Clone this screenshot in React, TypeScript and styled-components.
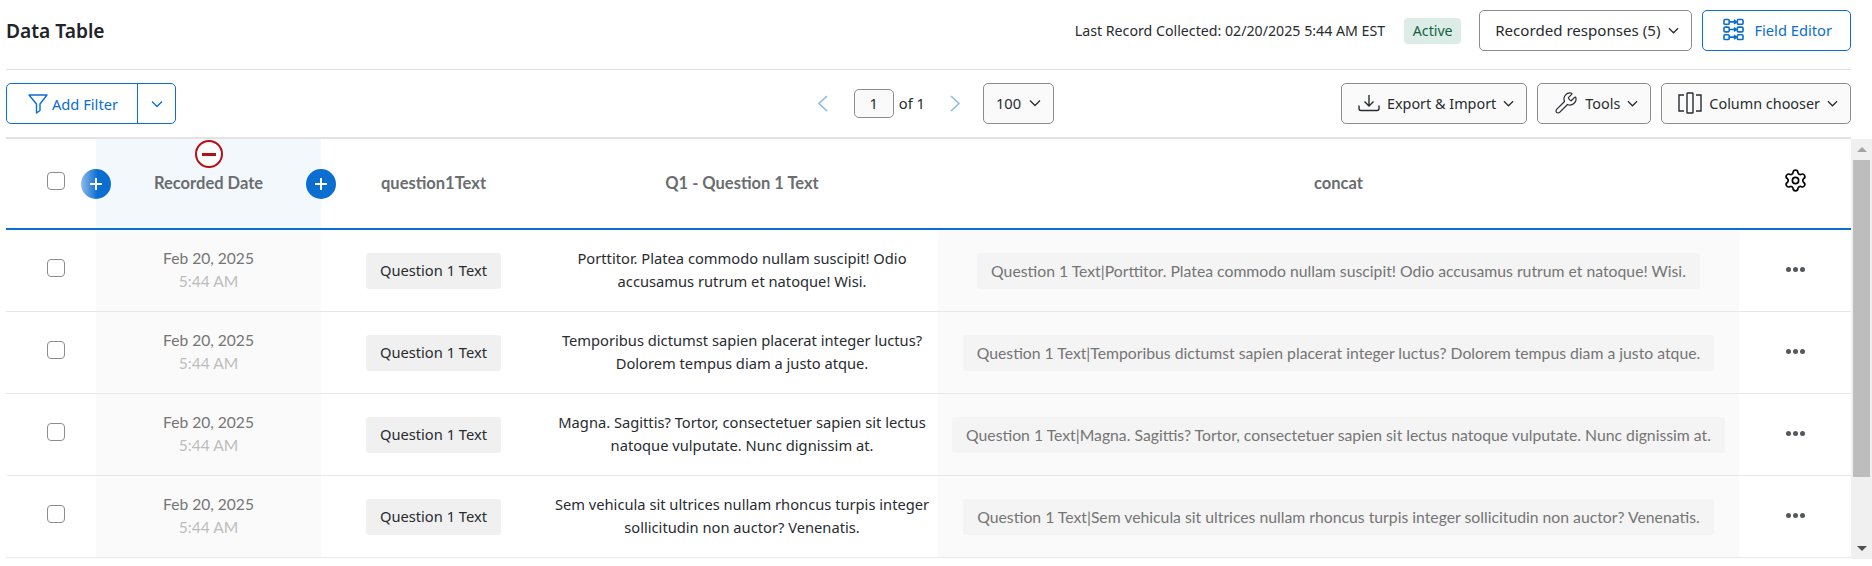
import styled, { createGlobalStyle } from "styled-components";
import { Settings, Wrench } from "lucide-react";

const rows = [
  {
    id: 1,
    text: "Porttitor. Platea commodo nullam suscipit! Odio accusamus rutrum et natoque! Wisi.",
  },
  {
    id: 2,
    text: "Temporibus dictumst sapien placerat integer luctus? Dolorem tempus diam a justo atque.",
  },
  {
    id: 3,
    text: "Magna. Sagittis? Tortor, consectetuer sapien sit lectus natoque vulputate. Nunc dignissim at.",
  },
  {
    id: 4,
    text: "Sem vehicula sit ultrices nullam rhoncus turpis integer sollicitudin non auctor? Venenatis.",
  },
];

const Chevron = ({ size = 11 }: { size?: number }) => (
  <svg width={size} height={size} viewBox="0 0 12 12" fill="none">
    <path d="M1 3.5 L6 8.5 L11 3.5" stroke="currentColor" strokeWidth="1.3" />
  </svg>
);

const FilterIcon = () => (
  <svg width="20" height="20" viewBox="0 0 20 20" fill="none">
    <path
      d="M1 1 H19 L12 10 V16.5 L8.5 19 V10 Z"
      stroke="currentColor"
      strokeWidth="1.4"
      strokeLinejoin="round"
    />
  </svg>
);

const FieldEditorIcon = () => (
  <svg width="21" height="24" viewBox="0 0 22 24" fill="none" stroke="currentColor" strokeWidth="1.7">
    {[1, 9, 17].map((y) => (
      <g key={y}>
        <rect x="1" y={y} width="5.5" height="5" rx="1.2" />
        <rect x="15" y={y} width="6" height="5" rx="1.2" />
        <path d={`M7 ${y + 2.5} H14 M11.5 ${y + 0.5} L14 ${y + 2.5} L11.5 ${y + 4.5}`} />
      </g>
    ))}
  </svg>
);

const ExportIcon = () => (
  <svg width="22" height="18" viewBox="0 0 22 18" fill="none" stroke="currentColor" strokeWidth="1.4">
    <path d="M11 1 V11.5 M6.5 7.5 L11 12 L15.5 7.5" />
    <path d="M1 12 V14.5 A2 2 0 0 0 3 16.5 H19 A2 2 0 0 0 21 14.5 V12" strokeLinecap="round" />
  </svg>
);

const ColumnsIcon = () => (
  <svg width="24" height="22" viewBox="0 0 24 22" fill="none" stroke="currentColor" strokeWidth="1.4">
    <path d="M6 3 H1 V19 H6" />
    <rect x="9" y="1" width="6" height="20" rx="0.5" />
    <path d="M18 3 H23 V19 H18" />
  </svg>
);

const PlusIcon = () => (
  <svg width="14" height="14" viewBox="0 0 14 14" fill="none">
    <path d="M7 1 V13 M1 7 H13" stroke="#fff" strokeWidth="2" />
  </svg>
);

const App = () => {
  return (
    <Page>
      <GlobalStyle />
      <Main>
        <TopBar>
          <Title>Data Table</Title>
          <TopRight>
            <LastRecord>Last Record Collected: 02/20/2025 5:44 AM EST</LastRecord>
            <ActiveBadge>Active</ActiveBadge>
            <ToolButton $plain>
              Recorded responses (5)
              <Chevron />
            </ToolButton>
            <BlueButton>
              <FieldEditorIcon />
              Field Editor
            </BlueButton>
          </TopRight>
        </TopBar>

        <Toolbar>
          <FilterGroup>
            <FilterMain>
              <FilterIcon />
              Add Filter
            </FilterMain>
            <FilterCaret>
              <Chevron size={12} />
            </FilterCaret>
          </FilterGroup>

          <Pager>
            <PageArrow>
              <svg width="11" height="17" viewBox="0 0 11 17" fill="none">
                <path d="M10 1 L2 8.5 L10 16" stroke="currentColor" strokeWidth="1.7" />
              </svg>
            </PageArrow>
            <PageInput>1</PageInput>
            <PageOf>of 1</PageOf>
            <PageArrow>
              <svg width="11" height="17" viewBox="0 0 11 17" fill="none">
                <path d="M1 1 L9 8.5 L1 16" stroke="currentColor" strokeWidth="1.7" />
              </svg>
            </PageArrow>
            <PageSize>
              100
              <Chevron size={12} />
            </PageSize>
          </Pager>

          <ToolbarRight>
            <ToolButton>
              <ExportIcon />
              Export &amp; Import
              <Chevron />
            </ToolButton>
            <ToolButton>
              <Wrench size={24} strokeWidth={1.2} />
              Tools
              <Chevron />
            </ToolButton>
            <ToolButton>
              <ColumnsIcon />
              Column chooser
              <Chevron />
            </ToolButton>
          </ToolbarRight>
        </Toolbar>

        <HeaderRow>
          <CheckCell>
            <Checkbox />
          </CheckCell>
          <HeaderCell $active>Recorded Date</HeaderCell>
          <HeaderCell>question1Text</HeaderCell>
          <HeaderCell>Q1 - Question 1 Text</HeaderCell>
          <HeaderCell>concat</HeaderCell>
          <GearCell>
            <Settings size={25} strokeWidth={1.6} color="#000" />
          </GearCell>
          <AddColumn $left={75} $fade>
            <PlusIcon />
          </AddColumn>
          <AddColumn $left={300}>
            <PlusIcon />
          </AddColumn>
          <RemoveColumn />
        </HeaderRow>

        {rows.map((row) => (
          <Row key={row.id}>
            <CheckCell>
              <Checkbox />
            </CheckCell>
            <DateCell>
              <DateText>Feb 20, 2025</DateText>
              <TimeText>5:44 AM</TimeText>
            </DateCell>
            <Cell>
              <Chip>Question 1 Text</Chip>
            </Cell>
            <TextCell>{row.text}</TextCell>
            <ConcatCell>
              <ConcatChip>Question 1 Text|{row.text}</ConcatChip>
            </ConcatCell>
            <Cell>
              <Dots>
                <Dot />
                <Dot />
                <Dot />
              </Dots>
            </Cell>
          </Row>
        ))}
      </Main>

      <Scrollbar>
        <ScrollButton>
          <ArrowUp />
        </ScrollButton>
        <ScrollThumb />
        <ScrollButton $bottom>
          <ArrowDown />
        </ScrollButton>
      </Scrollbar>
    </Page>
  );
};

export default App;

const GlobalStyle = createGlobalStyle`
  html, body {
    margin: 0;
    height: 566px;
    overflow: hidden;
    background: #fff;
  }
  * {
    box-sizing: border-box;
  }
  body {
    font-family: "Noto Sans", "Open Sans", sans-serif;
    font-size: 14.7px;
    color: #282c30;
  }
`;

const roundFont = `"Lato", "Noto Sans", sans-serif`;

const Page = styled.div`
  display: flex;
  align-items: flex-start;
  width: 1872px;
  height: 566px;
  padding-left: 6px;
`;

const Main = styled.div`
  width: 1845px;
`;

const TopBar = styled.div`
  display: flex;
  justify-content: space-between;
  align-items: center;
  height: 70px;
  padding: 10px 0 18px;
  border-bottom: 1px solid #e2e2e2;
`;

const Title = styled.h1`
  margin: 0;
  font-size: 19.2px;
  font-weight: 600;
  color: #1f2429;
`;

const TopRight = styled.div`
  display: flex;
  align-items: center;
`;

const LastRecord = styled.span`
  font-size: 14.2px;
  margin-right: 19px;
`;

const ActiveBadge = styled.span`
  display: flex;
  align-items: center;
  justify-content: center;
  width: 57px;
  height: 26px;
  margin-right: 18px;
  border-radius: 4px;
  background: #dcece6;
  color: #14633f;
  font-size: 14.2px;
`;

const ToolButton = styled.div<{ $plain?: boolean }>`
  display: flex;
  align-items: center;
  gap: ${(props) => (props.$plain ? "8px" : "7px")};
  height: 41px;
  padding: 0 12px 1px ${(props) => (props.$plain ? "15px" : "16px")};
  border: 1px solid #8c8c8c;
  border-radius: 5px;
  background: ${(props) => (props.$plain ? "#fff" : "#fafafa")};
  font-size: ${(props) => (props.$plain ? "15.1px" : "14.4px")};
  white-space: nowrap;
`;

const BlueButton = styled.div`
  display: flex;
  align-items: center;
  gap: 10px;
  height: 41px;
  margin-left: 10px;
  padding: 0 18px 1px 20px;
  border: 1px solid #0b6ed0;
  border-radius: 5px;
  color: #0b6ed0;
  white-space: nowrap;
`;

const Toolbar = styled.div`
  display: grid;
  grid-template-columns: 1fr auto 1fr;
  align-items: center;
  height: 69px;
  border-bottom: 2px solid #e2e2e2;
`;

const FilterGroup = styled.div`
  display: flex;
  width: 170px;
  height: 41px;
  border: 1px solid #0b6ed0;
  border-radius: 5px;
  color: #0b6ed0;
`;

const FilterMain = styled.div`
  display: flex;
  align-items: center;
  justify-content: center;
  gap: 4px;
  flex: 1;
  padding-left: 2px;
  border-right: 1px solid #0b6ed0;
`;

const FilterCaret = styled.div`
  display: flex;
  align-items: center;
  justify-content: center;
  width: 37px;
`;

const Pager = styled.div`
  display: flex;
  align-items: center;
  margin-left: 14px;
`;

const PageArrow = styled.div`
  display: flex;
  color: #8fbdea;
`;

const PageInput = styled.div`
  width: 40px;
  height: 29px;
  margin: 0 5px 0 26px;
  border: 1px solid #8c8c8c;
  border-radius: 5px;
  background: #fafafa;
  text-align: center;
  line-height: 26px;
`;

const PageOf = styled.span`
  margin: 0 25px 1px 0;
`;

const PageSize = styled.div`
  display: flex;
  align-items: center;
  gap: 8px;
  height: 41px;
  margin-left: 22px;
  padding: 0 12px 1px;
  border: 1px solid #8c8c8c;
  border-radius: 5px;
  background: #fafafa;
`;

const ToolbarRight = styled.div`
  display: flex;
  justify-content: flex-end;
  gap: 10px;
`;

const gridColumns = "90px 225px 225px 392px 801px 112px";

const HeaderRow = styled.div`
  position: relative;
  display: grid;
  grid-template-columns: ${gridColumns};
  height: 91px;
  border-bottom: 2px solid #0b6ed0;
`;

const HeaderCell = styled.div<{ $active?: boolean }>`
  display: flex;
  align-items: center;
  justify-content: center;
  padding-bottom: 2px;
  background: ${(props) => (props.$active ? "#f3f8fc" : "transparent")};
  color: #6a6d70;
  font-family: ${roundFont};
  font-size: 16.5px;
  font-weight: 700;
`;

const GearCell = styled(HeaderCell)`
  padding-bottom: 7px;
`;

const CheckCell = styled.div`
  display: flex;
  align-items: center;
  padding: 0 0 5px 41px;
`;

const Checkbox = styled.div`
  width: 18px;
  height: 18px;
  border: 1px solid #8c8c8c;
  border-radius: 4px;
  background: #fff;
`;

const AddColumn = styled.div<{ $left: number; $fade?: boolean }>`
  position: absolute;
  top: 30px;
  left: ${(props) => props.$left}px;
  display: flex;
  align-items: center;
  justify-content: center;
  width: 30px;
  height: 30px;
  border-radius: 50%;
  background: ${(props) =>
    props.$fade ? "linear-gradient(to right, #8fbbe8, #0b6ed0 55%)" : "#0b6ed0"};
`;

const RemoveColumn = styled.div`
  position: absolute;
  top: 1px;
  left: 189px;
  width: 28px;
  height: 28px;
  border: 2px solid #b70f16;
  border-radius: 50%;
  background: #fff;

  &::after {
    content: "";
    position: absolute;
    top: 10.5px;
    left: 5px;
    width: 14px;
    height: 3px;
    background: #b70f16;
  }
`;

const Row = styled.div`
  display: grid;
  grid-template-columns: ${gridColumns};
  height: 82px;
  border-bottom: 1px solid #e8e8e8;
`;

const Cell = styled.div`
  display: flex;
  align-items: center;
  justify-content: center;
`;

const DateCell = styled(Cell)`
  flex-direction: column;
  padding-bottom: 2px;
  background: #fafafa;
  font-family: ${roundFont};
  font-size: 15.6px;
  line-height: 23px;
`;

const DateText = styled.div`
  color: #757575;
`;

const TimeText = styled.div`
  color: #bdbdbd;
`;

const Chip = styled.div`
  display: flex;
  align-items: center;
  height: 36px;
  padding: 0 14px 1px;
  border-radius: 3px;
  background: #f0f0f0;
`;

const TextCell = styled(Cell)`
  padding: 0 8px 2px;
  text-align: center;
  line-height: 23px;
`;

const ConcatCell = styled(Cell)`
  background: #fafafa;
`;

const ConcatChip = styled.div`
  display: flex;
  align-items: center;
  height: 36px;
  padding: 0 14px 1px;
  border-radius: 3px;
  background: #f4f4f4;
  color: #757575;
  font-family: ${roundFont};
  font-size: 15.75px;
  white-space: nowrap;
`;

const Dots = styled.div`
  display: flex;
  gap: 2px;
  padding-bottom: 2px;
`;

const Dot = styled.span`
  width: 5px;
  height: 5px;
  border-radius: 50%;
  background: #55585b;
`;

const Scrollbar = styled.div`
  display: flex;
  flex-direction: column;
  width: 21px;
  height: 420px;
  margin-top: 139px;
  background: #f0f0f0;
`;

const ScrollButton = styled.div<{ $bottom?: boolean }>`
  display: flex;
  align-items: center;
  justify-content: center;
  height: 21px;
  margin-top: ${(props) => (props.$bottom ? "auto" : "0")};
`;

const ArrowUp = styled.div`
  border-left: 5px solid transparent;
  border-right: 5px solid transparent;
  border-bottom: 5px solid #a3a3a3;
`;

const ArrowDown = styled.div`
  border-left: 5px solid transparent;
  border-right: 5px solid transparent;
  border-top: 5px solid #505050;
`;

const ScrollThumb = styled.div`
  width: 17px;
  height: 317px;
  margin-left: 2px;
  background: #bdbdbd;
`;
